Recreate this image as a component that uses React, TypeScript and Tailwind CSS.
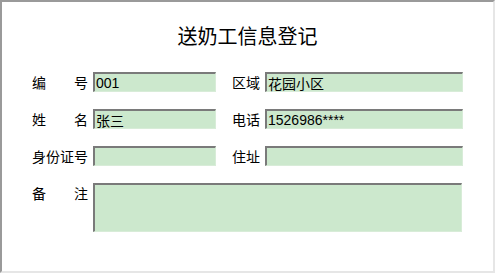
const font = "font-['Noto_Sans_CJK_SC','Noto_Sans',sans-serif]";

function Field({ value = "", className = "" }: { value?: string; className?: string }) {
  return (
    <div
      className={`h-[20px] border-t-2 border-l-2 border-t-[#7a7a7a] border-l-[#7a7a7a] border-r border-b border-r-[#d8ecd8] border-b-[#d8ecd8] bg-[#cce8cd] pl-[1px] text-[14px] leading-[18px] text-black ${className}`}
    >
      {value}
    </div>
  );
}

function Label({ text }: { text: string }) {
  const chars = text.split("");
  return (
    <div className="flex w-[56px] justify-between text-[14px] leading-[20px]">
      {chars.map((c, i) => (
        <span key={i}>{c}</span>
      ))}
    </div>
  );
}

export default function App() {
  return (
    <div
      className={`h-[273px] w-[495px] border-t-2 border-l-2 border-t-[#9a9a9a] border-l-[#9a9a9a] border-r-2 border-b-2 border-r-[#e6e6e6] border-b-[#e6e6e6] bg-white ${font} text-black`}
    >
      <div className="pt-[20px] text-center text-[20px] leading-[28px]">送奶工信息登记</div>

      <div className="mt-[22px] flex flex-col gap-[17px] pl-[30px]">
        <div className="flex items-center">
          <Label text="编号" />
          <Field value="001" className="ml-[5px] w-[123px] font-['Liberation_Sans',sans-serif]" />
          <div className="ml-[16px] w-[33px] text-[14px] leading-[20px]">区域</div>
          <Field value="花园小区" className="w-[198px]" />
        </div>
        <div className="flex items-center">
          <Label text="姓名" />
          <Field value="张三" className="ml-[5px] w-[123px]" />
          <div className="ml-[16px] w-[33px] text-[14px] leading-[20px]">电话</div>
          <Field value="1526986****" className="w-[198px] font-['Liberation_Sans',sans-serif]" />
        </div>
        <div className="flex items-center">
          <Label text="身份证号" />
          <Field className="ml-[5px] w-[123px]" />
          <div className="ml-[16px] w-[33px] text-[14px] leading-[20px]">住址</div>
          <Field className="w-[198px]" />
        </div>
        <div className="flex items-start">
          <Label text="备注" />
          <Field className="ml-[5px] !h-[49px] w-[369px]" />
        </div>
      </div>
    </div>
  );
}
